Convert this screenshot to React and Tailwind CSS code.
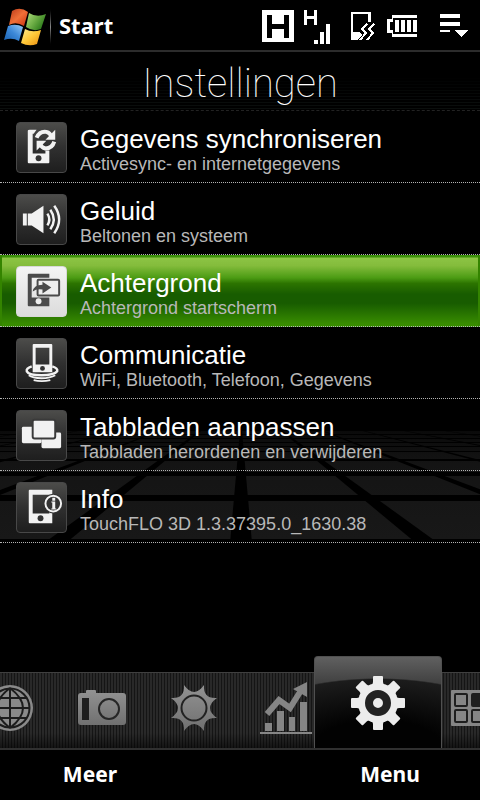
const SyncIcon = () => (
  <svg viewBox="0 0 50 50" className="size-full" aria-hidden="true">
    <path fill="#f2f2f2" d="M13 7h7l-3 4h-1v20h13v-3h4v12q0 1-1 1H12q-1 0-1-1V8q0-1 2-1z" />
    <circle cx="22" cy="36" r="3" fill="#333" />
    <path d="M20 15q3-7 10-6 4 1 5 5" fill="none" stroke="#f2f2f2" strokeWidth="4" />
    <path d="M38 19q-2 7-9 7-4-1-5-4" fill="none" stroke="#f2f2f2" strokeWidth="4" />
    <path fill="#f2f2f2" d="M39 7v10H29zM20 28V18h10z" />
  </svg>
);

const SoundIcon = () => (
  <svg viewBox="0 0 50 50" className="size-full" aria-hidden="true">
    <path fill="#f2f2f2" d="M6 19h4v12H6zM11 19h4l12-8v28l-12-8h-4z" />
    <g fill="none" stroke="#f2f2f2" strokeWidth="2.5">
      <path d="M31 19q4 6 0 12" />
      <path d="M34 15q7 10 0 20" />
      <path d="M38 11q10 14 0 28" />
    </g>
  </svg>
);

const WallpaperIcon = () => (
  <svg viewBox="0 0 50 50" className="size-full" aria-hidden="true">
    <path fill="#4a4a4a" d="M12 7h21v4H15v20h18v9H12q-1 0-1-1V8q0-1 1-1z" />
    <circle cx="22" cy="35" r="3" fill="#eee" />
    <rect x="21" y="13" width="22" height="16" rx="1" fill="#eee" stroke="#4a4a4a" strokeWidth="2" />
    <path fill="#4a4a4a" d="M16 25q1-7 10-7v-3l9 6-9 6v-4q-6-1-10 2z" />
  </svg>
);

const DockIcon = () => (
  <svg viewBox="0 0 50 50" className="size-full" aria-hidden="true">
    <g fill="none" stroke="#f2f2f2" strokeWidth="2">
      <path d="M15 28q-6 2-5 5 2 4 15 4t16-4q1-3-5-5" strokeWidth="2.5" />
      <path d="M12 37q4 3 13 3t14-3" />
      <path d="M17 42q8 2 17 0" />
    </g>
    <path fill="#f2f2f2" fillRule="evenodd" d="M17 5h18q1 0 1 1v28H16V6q0-1 1-1zm2 4v17h14V9z" />
    <circle cx="26" cy="30" r="2.5" fill="#333" />
  </svg>
);

const TabsIcon = () => (
  <svg viewBox="0 0 50 50" className="size-full" aria-hidden="true">
    <rect x="5" y="16" width="20" height="17" rx="1.5" fill="#f2f2f2" />
    <rect x="25" y="22" width="20" height="16" rx="1.5" fill="#f2f2f2" />
    <rect x="16" y="9" width="23" height="19" rx="2" fill="#f2f2f2" stroke="#3a3a3a" strokeWidth="2" />
  </svg>
);

const InfoIcon = () => (
  <svg viewBox="0 0 50 50" className="size-full" aria-hidden="true">
    <path fill="#f2f2f2" fillRule="evenodd" d="M13 7h23v34H13q-1 0-1-1V8q0-1 1-1zm3 5v19h17V12z" />
    <circle cx="24" cy="36" r="3" fill="#333" />
    <circle cx="37" cy="21" r="10" fill="#333" />
    <circle cx="37" cy="21" r="8" fill="#333" stroke="#f2f2f2" strokeWidth="2" />
    <path fill="#f2f2f2" d="M36 15h3v3h-3zM35 19h4v7h1v1h-5v-1h1v-6h-1z" />
  </svg>
);

const items = [
  { title: 'Gegevens synchroniseren', subtitle: 'Activesync- en internetgegevens', Icon: SyncIcon },
  { title: 'Geluid', subtitle: 'Beltonen en systeem', Icon: SoundIcon },
  { title: 'Achtergrond', subtitle: 'Achtergrond startscherm', Icon: WallpaperIcon, selected: true },
  { title: 'Communicatie', subtitle: 'WiFi, Bluetooth, Telefoon, Gegevens', Icon: DockIcon },
  { title: 'Tabbladen aanpassen', subtitle: 'Tabbladen herordenen en verwijderen', Icon: TabsIcon },
  { title: 'Info', subtitle: 'TouchFLO 3D 1.3.37395.0_1630.38', Icon: InfoIcon },
];

const SettingRow = ({ title, subtitle, Icon, selected }) => (
  <li
    className={
      selected
        ? 'border-b border-dotted border-[#b4b4b4] bg-[linear-gradient(#3a8f08_0_2px,#8cc444_3px,#84bc3c_15%,#4c9c14_32%,#2c7400_40%,#185c00_55%,#185c00_68%,#388c00_97%)]'
        : 'border-b border-dotted border-[#b4b4b4]'
    }
  >
    <button
      type="button"
      className={
        selected
          ? 'flex w-full items-start gap-[13px] border-x-2 border-[#348400] pt-[11px] pr-2 pb-2 pl-[14px] text-left'
          : 'flex w-full items-start gap-[13px] pt-[11px] pr-2 pb-2 pl-4 text-left'
      }
    >
      <span
        className={
          selected
            ? 'size-[51px] shrink-0 rounded-[4px] border border-[#d8d8d8] bg-linear-to-b from-[#f4f4f4] to-[#dcdcdc]'
            : 'size-[51px] shrink-0 rounded-[4px] border border-[#484848] bg-linear-to-b from-[#4c4c4a] via-[#303030] to-[#1e1e1e]'
        }
      >
        <Icon />
      </span>
      <span className="flex min-w-0 flex-col gap-px pt-[3px]">
        <span className="text-[26px] leading-[28px] text-white">{title}</span>
        <span className="text-[18px] leading-[20px] text-[#b8b8b8]">{subtitle}</span>
      </span>
    </button>
  </li>
);

// Tiled floor that runs away towards the horizon behind the last rows
const Floor = () => {
  const seams = [-9, -8, -7, -6, -5, -4, -3, -2, -1, 0, 1, 2, 3, 4, 5, 6, 7, 8, 9];
  return (
    <svg
      viewBox="0 0 480 112"
      preserveAspectRatio="xMidYMax slice"
      className="absolute bottom-0 left-0 h-[112px] w-full"
      aria-hidden="true"
    >
      <defs>
        <linearGradient id="floor" x1="0" y1="0" x2="0" y2="1">
          <stop offset="0" stopColor="#0a0a0a" />
          <stop offset="0.3" stopColor="#141414" />
          <stop offset="1" stopColor="#181818" />
        </linearGradient>
      </defs>
      <rect width="480" height="108" fill="url(#floor)" />
      {seams.map((k) => (
        <polygon key={k} points={`${241 + k * 41 - 1},0 ${241 + k * 41 + 1},0 ${241 + k * 186 + 11},112 ${241 + k * 186 - 11},112`} />
      ))}
      <path d="M0 3h480v1H0zM0 7h480v1H0zM0 11h480v1H0zM0 15h480v1H0zM0 20h480v1H0zM0 28h480v2H0zM0 41h480v4H0zM0 64h480v6H0z" />
    </svg>
  );
};

const GlobeIcon = () => (
  <svg viewBox="0 0 48 48" className="size-12" fill="none" stroke="#1c1c1c" strokeWidth="2" aria-hidden="true">
    <circle cx="24" cy="24" r="23" fill="#8a8a8a" stroke="none" />
    <circle cx="24" cy="24" r="19.5" />
    <path d="M24 4v40M5 24h38M8 14h32M8 34h32M24 4q-26 20 0 40M24 4q26 20 0 40" />
  </svg>
);

const CameraIcon = () => (
  <svg viewBox="0 0 48 36" className="h-9 w-12" aria-hidden="true">
    <path fill="url(#tabGrey)" d="M3 3h5V1q0-1 1-1h8q1 0 1 1v2h27q3 0 3 3v26q0 3-3 3H3q-3 0-3-3V6q0-3 3-3z" />
    <rect x="4" y="8" width="7" height="22" fill="#1e1e1e" />
    <circle cx="31" cy="19" r="10" fill="none" stroke="#262626" strokeWidth="2" />
  </svg>
);

const SunIcon = () => (
  <svg viewBox="-24 -24 48 48" className="size-12" aria-hidden="true">
    <path
      fill="url(#tabGrey)"
      d="M-10-23Q0-9 10-23 9-9 23-10 9 0 23 10 9 9 10 23 0 9-10 23-9 9-23 10-9 0-23-10-9-9-10-23z"
    />
    <circle r="12.5" fill="none" stroke="#222" strokeWidth="2" />
  </svg>
);

const ChartIcon = () => (
  <svg viewBox="0 0 52 52" className="size-[52px]" fill="#858585" aria-hidden="true">
    <path d="M0 50h52v2H0zM5 41h7v8H5zM17 29h7v20h-7zM29 35h6v14h-6zM40 20h7v29h-7z" />
    <path d="M7 32 19 18l11 8L40 10" fill="none" stroke="#858585" strokeWidth="6" />
    <path d="M33 7 47 0v15z" />
  </svg>
);

const GearIcon = () => (
  <svg viewBox="-27 -27 54 54" className="size-[54px]" aria-hidden="true">
    <g fill="#ececec">
      <circle r="20" />
      {[0, 45, 90, 135, 180, 225, 270, 315].map((deg) => (
        <path key={deg} transform={`rotate(${deg})`} d="M-6-17-5-21v-5q0-1 1-1h8q1 0 1 1v5l1 4z" />
      ))}
    </g>
    <circle r="9" fill="none" stroke="#222" strokeWidth="8" />
  </svg>
);

const GridIcon = () => (
  <svg viewBox="0 0 44 36" className="ml-[5px] h-9 w-11" aria-hidden="true">
    <rect width="44" height="36" rx="1" fill="#858585" />
    <g fill="#858585" stroke="#1e1e1e" strokeWidth="2">
      <rect x="4" y="4" width="12" height="12" rx="1" />
      <rect x="21" y="4" width="12" height="12" rx="1" fill="#1e1e1e" />
      <rect x="4" y="20" width="12" height="12" rx="1" />
      <rect x="21" y="20" width="12" height="12" rx="1" />
    </g>
  </svg>
);

const tabs = [
  { label: 'Internet', Icon: GlobeIcon },
  { label: "Foto's", Icon: CameraIcon },
  { label: 'Weer', Icon: SunIcon },
  { label: 'Aandelen', Icon: ChartIcon },
  { label: 'Instellingen', Icon: GearIcon, active: true },
  { label: "Programma's", Icon: GridIcon },
];

const WindowsFlag = () => (
  <svg viewBox="0 0 44 38" className="h-[38px] w-11" aria-hidden="true">
    <defs>
      <linearGradient id="red" x1="0" y1="0" x2="1" y2="1">
        <stop offset="0" stopColor="#b83818" />
        <stop offset="0.5" stopColor="#f07038" />
        <stop offset="1" stopColor="#c83010" />
      </linearGradient>
      <linearGradient id="green" x1="0" y1="0" x2="1" y2="0.6">
        <stop offset="0" stopColor="#b0dc80" />
        <stop offset="0.5" stopColor="#70b048" />
        <stop offset="1" stopColor="#287818" />
      </linearGradient>
      <linearGradient id="blue" x1="1" y1="0" x2="0" y2="1">
        <stop offset="0" stopColor="#98ccf8" />
        <stop offset="0.5" stopColor="#3c88d8" />
        <stop offset="1" stopColor="#1860b0" />
      </linearGradient>
      <linearGradient id="yellow" x1="0" y1="0" x2="1" y2="1">
        <stop offset="0" stopColor="#ffec90" />
        <stop offset="0.5" stopColor="#ffc838" />
        <stop offset="1" stopColor="#e88c10" />
      </linearGradient>
    </defs>
    <path fill="url(#red)" d="M8 3q8-5 16 1l-4 14q-8-5-15-1z" />
    <path fill="url(#green)" d="M25 5q8 5 17 1l-5 15q-8 3-15-2z" />
    <path fill="url(#blue)" d="M4 18q8-3 15 1l-4 14q-7-4-15-1z" />
    <path fill="url(#yellow)" d="M21 21q7 4 16 1l-4 14q-8 3-16-1z" />
  </svg>
);

const StatusIcons = () => (
  <svg viewBox="0 0 208 36" className="h-9 w-[208px]" fill="#fff" shapeRendering="crispEdges" aria-hidden="true">
    {/* HSDPA */}
    <path fillRule="evenodd" d="M0 1h32v32H0zM5 6v23h5V20h12v9h5V6h-5v9H10V6z" />
    {/* Signal */}
    <path d="M42 1h3v6h7V1h3v15h-3V10h-7v6h-3zM52 31h4v4h-4zM58 23h4v12h-4zM64 15h4v20h-4z" />
    {/* Vibrate */}
    <path d="M89 3h20v10h-3V5H91v18h7l2 3-4 5h-7z" />
    <path d="M105 15l-5 5 4 4-6 7M112 15l-5 5 4 4-6 7" fill="none" stroke="#fff" strokeWidth="2" />
    {/* Battery */}
    <path d="M130 6h25v3h-24v4h-3v8h3v4h24v3h-25v-4h-5V10h5zM133 11h4v12h-4zM139 11h4v12h-4zM145 11h4v12h-4zM151 11h4v12h-4z" />
    {/* Notifications */}
    <path d="M178 5h20v4h-20zM178 13h20v4h-20zM178 21h10v2h-10zM192 21h14l-7 7z" />
  </svg>
);

const App = () => {
  return (
    <div className="flex min-h-screen flex-col overflow-hidden bg-black font-['Liberation_Sans',Arial,sans-serif] text-white">
      <header className="flex h-[52px] items-center border-b-2 border-[#2c2c2c] pt-1 pr-[10px] pl-1">
        <button type="button" className="flex items-center font-['Noto_Sans',sans-serif] text-[22px] leading-[28px] font-bold">
          <WindowsFlag />
          <span className="mr-2 ml-[2px] h-10 w-px bg-linear-to-b from-black via-[#888] to-black"></span>
          <span className="pb-1">Start</span>
        </button>
        <div className="ml-auto">
          <StatusIcons />
        </div>
      </header>

      <h1 className="border-b border-dashed border-[#222] bg-[linear-gradient(#000_40%,transparent),repeating-linear-gradient(#000_0_2px,#0c0f0e_2px_3px)] pt-[6px] text-center font-['Roboto','Inter',sans-serif] text-[40px] leading-[52px] font-thin">
        Instellingen
      </h1>

      <main className="relative">
        <Floor />
        <ul className="relative">
          {items.map((item) => (
            <SettingRow key={item.title} {...item} />
          ))}
        </ul>
      </main>

      <nav className="mt-auto overflow-hidden pt-4">
        <svg width="0" height="0" className="absolute" aria-hidden="true">
          <linearGradient id="tabGrey" x1="0" y1="0" x2="0" y2="1">
            <stop offset="0" stopColor="#929292" />
            <stop offset="1" stopColor="#707070" />
          </linearGradient>
        </svg>
        <div className="flex h-[76px] justify-center border-t border-[#404040] bg-[linear-gradient(transparent_80%,#0008),repeating-linear-gradient(90deg,#292929_0_2px,#151515_2px_3px)]">
          {tabs.map(({ label, Icon, active }) => (
            <button
              key={label}
              type="button"
              aria-label={label}
              className={
                active
                  ? 'relative -mx-[18px] -mt-[17px] flex w-32 shrink-0 items-center justify-center rounded-t-[4px] border border-b-0 border-[#505050] bg-[radial-gradient(ellipse_160px_70px_at_50%_100%,#020202_0_40%,#1c1c1c_98%,transparent_100%),linear-gradient(#606060,#3a3a3a_35%,#080808_80%)]'
                  : 'flex w-[92px] shrink-0 items-center justify-center pb-[6px]'
              }
            >
              <Icon />
            </button>
          ))}
        </div>
      </nav>

      <footer className="flex h-[52px] justify-between border-t-2 border-[#303030] pb-[2px] font-['Noto_Sans',sans-serif] text-[21px] leading-[28px] font-bold">
        <button type="button" className="w-3/8">Meer</button>
        <button type="button" className="w-3/8">Menu</button>
      </footer>
    </div>
  );
};

export default App;
